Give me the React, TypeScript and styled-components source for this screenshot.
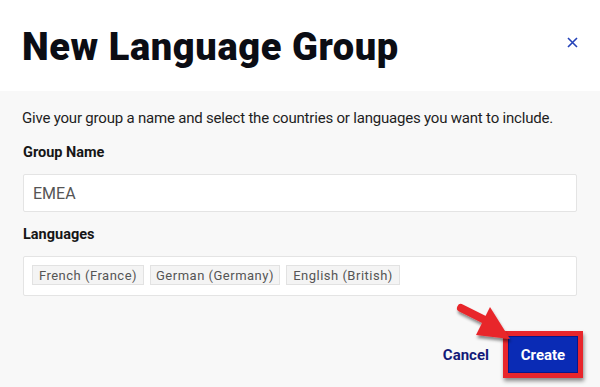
import React from "react";
import styled, { createGlobalStyle } from "styled-components";

const Global = createGlobalStyle`
  html, body { margin: 0; padding: 0; background: #f8f8f8; }
  body { font-family: Roboto, "Liberation Sans", sans-serif; }
  * { box-sizing: border-box; }
`;

const Modal = styled.div`
  width: 600px;
  height: 387px;
  display: flex;
  flex-direction: column;
  overflow: hidden;
`;

const Header = styled.header`
  height: 91px;
  background: #ffffff;
  display: flex;
  align-items: center;
  justify-content: space-between;
  padding: 0 20px 0 22px;
`;

const Title = styled.h1`
  margin: 0;
  font-family: Roboto, "Liberation Sans", sans-serif;
  font-weight: 900;
  font-size: 38px;
  letter-spacing: 0.6px;
  color: #0b0d14;
  line-height: 1;
  padding-top: 2px;
`;

const Close = styled.button`
  border: 0;
  background: none;
  padding: 0;
  width: 14px;
  height: 14px;
  margin: 0 1px 6px 0;
  display: flex;
  align-items: center;
  justify-content: center;
  cursor: pointer;
`;

const Body = styled.main`
  flex: 1;
  background: #f8f8f8;
  padding: 17px 23px 0 23px;
  display: flex;
  flex-direction: column;
`;

const Intro = styled.p`
  margin: 0 0 0 -1px;
  font-size: 15px;
  line-height: 20px;
  color: #1e1e1e;
  letter-spacing: -0.2px;
`;

const Label = styled.label<{ $top: number }>`
  display: block;
  margin-top: ${(p) => p.$top}px;
  font-size: 14.5px;
  font-weight: 700;
  color: #161616;
  line-height: 18px;
`;

const Field = styled.div`
  margin-top: 12px;
  height: 38px;
  background: #fff;
  border: 1px solid #e4e4e4;
  border-radius: 2px;
  display: flex;
  align-items: center;
  padding: 0 9px;
  font-size: 16px;
  color: #555;
`;

const TagBox = styled.div`
  margin-top: 12px;
  height: 40px;
  background: #fff;
  border: 1px solid #e4e4e4;
  border-radius: 2px;
  display: flex;
  align-items: center;
  gap: 6px;
  padding: 0 8px 2px 8px;
`;

const Tag = styled.span<{ $w: number }>`
  flex: 0 0 ${(p) => p.$w}px;
  height: 20px;
  background: #f4f4f4;
  border: 1px solid #e2e2e2;
  display: flex;
  align-items: center;
  justify-content: center;
  white-space: nowrap;
  font-size: 13px;
  letter-spacing: 0.5px;
  color: #555;
`;

const Footer = styled.div`
  margin-top: 35px;
  display: flex;
  justify-content: flex-end;
  align-items: center;
  gap: 14px;
`;

const Cancel = styled.button`
  border: 0;
  background: none;
  padding: 0;
  font-family: Roboto, "Liberation Sans", sans-serif;
  font-weight: 700;
  font-size: 15px;
  color: #131a78;
  cursor: pointer;
`;

const Highlight = styled.div`
  position: relative;
  border: 5px solid #e8262c;
  box-shadow: 1px 3px 4px rgba(0, 0, 0, 0.45);
  margin-right: -6px;
`;

const Create = styled.button`
  display: block;
  width: 70px;
  height: 37px;
  border: 1px solid #06188a;
  background: #0a2bb5;
  color: #fff;
  font-family: Roboto, "Liberation Sans", sans-serif;
  font-weight: 700;
  font-size: 15px;
  cursor: pointer;
`;

const Arrow = styled.svg`
  position: absolute;
  left: -57px;
  top: -39px;
  overflow: visible;
  pointer-events: none;
`;

export default function App() {
  return (
    <Modal>
      <Global />
      <Header>
        <Title>New Language Group</Title>
        <Close aria-label="Close">
          <svg width="11" height="11" viewBox="0 0 11 11">
            <path d="M1 1 L10 10 M10 1 L1 10" stroke="#2442b8" strokeWidth="1.6" />
          </svg>
        </Close>
      </Header>
      <Body>
        <Intro>Give your group a name and select the countries or languages you want to include.</Intro>
        <Label $top={16}>Group Name</Label>
        <Field>EMEA</Field>
        <Label $top={14}>Languages</Label>
        <TagBox>
          <Tag $w={112}>French (France)</Tag>
          <Tag $w={130}>German (Germany)</Tag>
          <Tag $w={114}>English (British)</Tag>
        </TagBox>
        <Footer>
          <Cancel>Cancel</Cancel>
          <Highlight>
            <Create>Create</Create>
            <Arrow width="62" height="44" viewBox="0 0 62 44">
              <defs>
                <filter id="sh" x="-30%" y="-30%" width="170%" height="180%">
                  <feDropShadow dx="1" dy="3" stdDeviation="1.5" floodColor="#000" floodOpacity="0.45" />
                </filter>
              </defs>
              <g filter="url(#sh)">
                <path d="M10 11 L42 27" stroke="#e8262c" strokeWidth="8" strokeLinecap="round" />
                <path d="M39 10 L25 38 L59 42 Z" fill="#e8262c" />
              </g>
            </Arrow>
          </Highlight>
        </Footer>
      </Body>
    </Modal>
  );
}
